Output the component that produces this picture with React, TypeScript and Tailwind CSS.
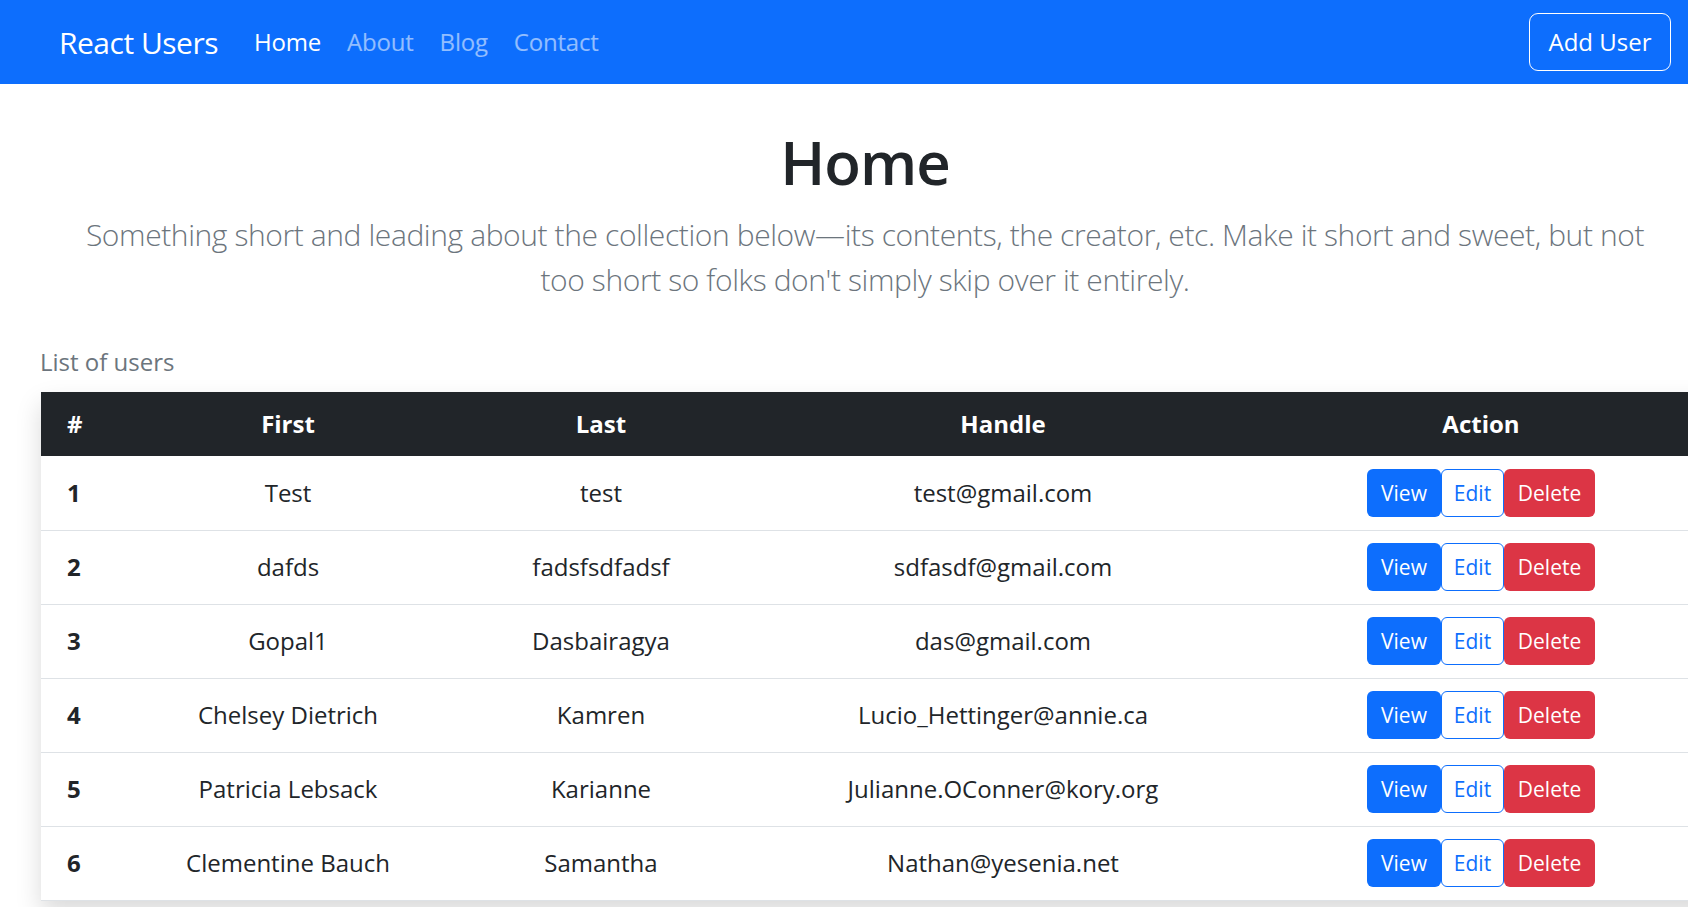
import React from 'react';

const users = [
  { id: 1, first: 'Test', last: 'test', handle: 'test@gmail.com' },
  { id: 2, first: 'dafds', last: 'fadsfsdfadsf', handle: 'sdfasdf@gmail.com' },
  { id: 3, first: 'Gopal1', last: 'Dasbairagya', handle: 'das@gmail.com' },
  { id: 4, first: 'Chelsey Dietrich', last: 'Kamren', handle: 'Lucio_Hettinger@annie.ca' },
  { id: 5, first: 'Patricia Lebsack', last: 'Karianne', handle: 'Julianne.OConner@kory.org' },
  { id: 6, first: 'Clementine Bauch', last: 'Samantha', handle: 'Nathan@yesenia.net' },
];

const Navbar = () => {
  const links = ['Home', 'About', 'Blog', 'Contact'];
  return (
    <nav className="h-[84px] bg-[#0d6efd] flex items-center justify-between pl-[59px] pr-[17px]">
      <div className="flex items-center">
        <a href="#" className="text-[30px] leading-[45px] text-white tracking-[-0.5px] mr-[36px]">React Users</a>
        <ul className="flex items-center gap-[26px]">
          {links.map((l, i) => (
            <li key={l}>
              <a href="#" className={`text-[24px] leading-[36px] tracking-[-0.2px] ${i === 0 ? 'text-white' : 'text-white/55'}`}>
                {l}
              </a>
            </li>
          ))}
        </ul>
      </div>
      <button className="h-[58px] w-[142px] border border-white rounded-[9px] text-white text-[24px]">Add User</button>
    </nav>
  );
};

const Actions = () => (
  <div className="inline-flex h-[48px] text-[21px]">
    <button className="w-[74px] bg-[#0d6efd] text-white rounded-[6px]">View</button>
    <button className="w-[63px] border border-[#0d6efd] text-[#0d6efd] bg-white rounded-[6px]">Edit</button>
    <button className="w-[91px] bg-[#dc3545] text-white rounded-[6px]">Delete</button>
  </div>
);

export default function App() {
  return (
    <div className="h-screen w-screen overflow-hidden bg-white text-[#212529] font-['Segoe_UI','Open_Sans',sans-serif]">
      <Navbar />
      <div className="w-[1730px]">
        <section className="text-center pt-[42px] pb-[42px]">
          <h1 className="text-[60px] leading-[72px] font-semibold tracking-[-1px]">Home</h1>
          <p className="mt-[14px] text-[30px] leading-[45px] font-light tracking-[-0.4px] text-[#6c757d]">
            Something short and leading about the collection below—its contents, the creator, etc. Make it short and sweet, but not
            <br />
            too short so folks don't simply skip over it entirely.
          </p>
        </section>
        <div className="pl-[41px] pr-[18px]">
          <div className="text-[24px] leading-[36px] text-[#6c757d] -ml-[1px] pb-[12px]">List of users</div>
          <table className="w-[1671px] table-fixed border-collapse text-[24px] leading-[36px] shadow-[0_12px_24px_rgba(0,0,0,0.15)]">
            <thead className="bg-[#212529] text-white">
              <tr className="h-[64px]">
                <th className="w-[89px] text-left pl-[26px] font-bold">#</th>
                <th className="w-[316px] font-bold">First</th>
                <th className="w-[310px] font-bold">Last</th>
                <th className="w-[494px] font-bold">Handle</th>
                <th className="w-[462px] font-bold">Action</th>
              </tr>
            </thead>
            <tbody>
              {users.map((u) => (
                <tr key={u.id} className="h-[74px] border-b border-[#dee2e6] text-center">
                  <td className="text-left pl-[26px] font-bold">{u.id}</td>
                  <td>{u.first}</td>
                  <td>{u.last}</td>
                  <td>{u.handle}</td>
                  <td>
                    <Actions />
                  </td>
                </tr>
              ))}
            </tbody>
          </table>
        </div>
      </div>
    </div>
  );
}
